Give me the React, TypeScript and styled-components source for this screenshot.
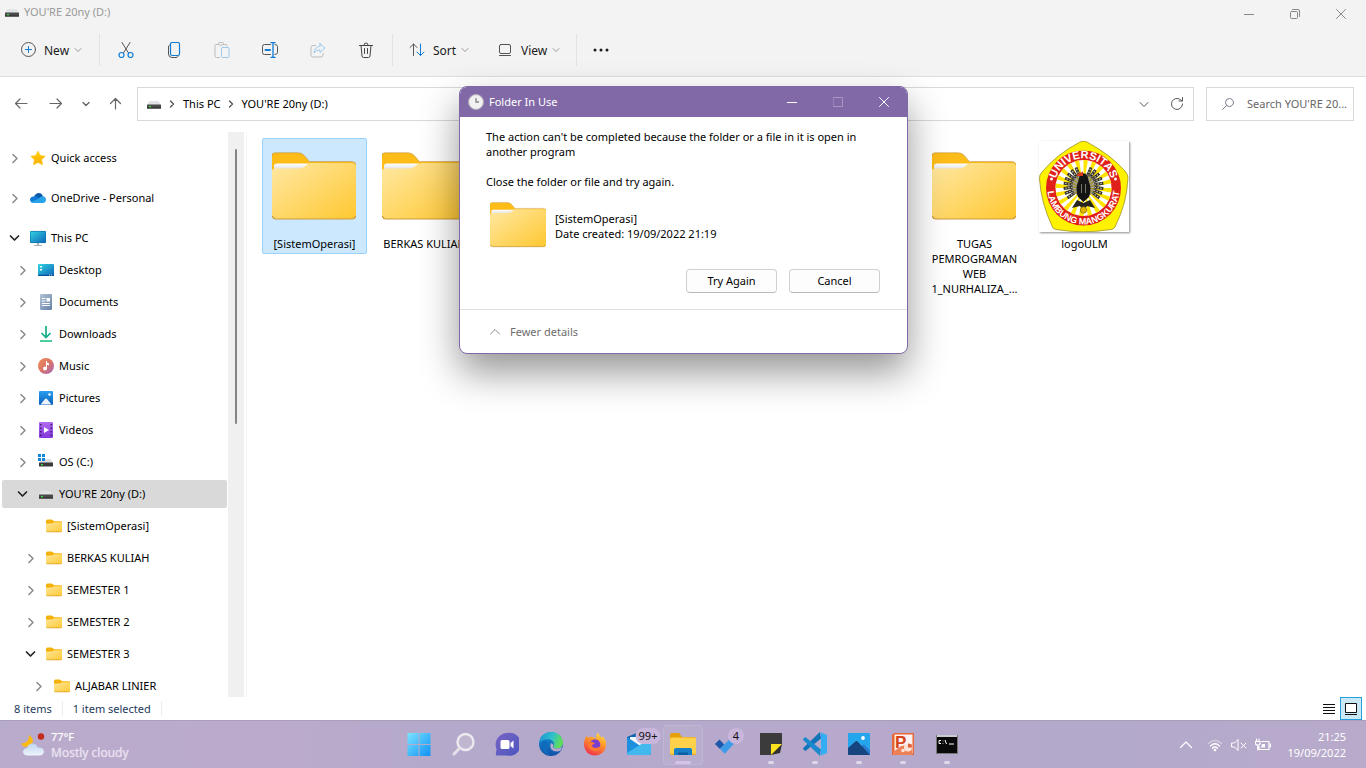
import React from "react";
import styled, { createGlobalStyle, css } from "styled-components";

const GlobalStyle = createGlobalStyle`
  * { box-sizing: border-box; }
  body {
    margin: 0;
    font: 11px/15px "Noto Sans", "Open Sans", sans-serif;
    color: #000;
    background: #fff;
    overflow: hidden;
  }
  button, input { font: inherit; color: inherit; }
  button { border: 0; padding: 0; background: none; }
  svg { display: block; flex: none; }
  ul { list-style: none; margin: 0; padding: 0; }
  p { margin: 0; }
`;

const Screen = styled.div`
  height: 100vh;
  display: flex;
  flex-direction: column;
`;

/* ---------- window chrome ---------- */

const TitleBar = styled.header`
  display: flex;
  align-items: flex-start;
  height: 28px;
  padding: 0 2px 0 4px;
  background: #f3f3f3;
  color: #999;
`;

const WindowTitle = styled.div`
  display: flex;
  align-items: center;
  gap: 4px;
  flex: 1;
  height: 23px;
`;

const CaptionButton = styled.button<{ $dim?: boolean }>`
  display: flex;
  align-items: center;
  justify-content: center;
  width: 46px;
  height: 28px;
  opacity: ${(p) => (p.$dim ? 0.3 : 1)};
`;

const CommandBar = styled.div`
  display: flex;
  align-items: center;
  height: 49px;
  padding: 0 0 4px 20px;
  background: #f3f3f3;
  border-bottom: 1px solid #dedede;
`;

const MenuButton = styled.button<{ $width: number }>`
  display: flex;
  align-items: center;
  gap: 8px;
  width: ${(p) => p.$width}px;
  height: 32px;
  font-size: 12px;
  color: #1b1b1b;
`;

const MenuLabel = styled.span`
  margin-right: -5px;
`;

const Separator = styled.span<{ $after?: number }>`
  width: 1px;
  height: 32px;
  margin-right: ${(p) => p.$after ?? 0}px;
  background: #e2e2e2;
`;

const ToolButton = styled.button`
  display: flex;
  align-items: center;
  justify-content: center;
  width: 48px;
  height: 32px;
`;

const Tools = styled.div`
  display: flex;
  padding: 0 2px;
`;

/* ---------- address row ---------- */

const AddressRow = styled.div`
  display: flex;
  align-items: center;
  padding: 10px 12px 11px 2px;
`;

const NavButton = styled.button<{ $width: number }>`
  display: flex;
  align-items: center;
  justify-content: center;
  width: ${(p) => p.$width}px;
  height: 32px;
`;

const AddressBox = styled.nav`
  display: flex;
  align-items: center;
  flex: 1;
  height: 34px;
  margin: 0 12px 0 7px;
  padding: 0 8px 1px;
  border: 1px solid #d9d9d9;
`;

const Crumb = styled.button`
  padding: 0 5px 0 4px;
`;

const AddressTools = styled.div`
  display: flex;
  gap: 17px;
  margin-left: auto;
`;

const SearchBox = styled.label`
  display: flex;
  align-items: center;
  gap: 11px;
  width: 148px;
  height: 34px;
  padding: 0 0 1px 13px;
  border: 1px solid #d9d9d9;
`;

const SearchInput = styled.input`
  flex: 1;
  min-width: 0;
  padding: 0;
  border: 0;
  outline: 0;
  background: none;
  &::placeholder { color: #666; opacity: 1; }
`;

/* ---------- body ---------- */

const Body = styled.div`
  display: flex;
  flex: 1;
  min-height: 0;
`;

const Sidebar = styled.aside`
  display: flex;
  width: 247px;
  border-right: 1px solid #f5f5f5;
  overflow: hidden;
`;

const Tree = styled.ul`
  flex: 1;
  padding: 10px 1px 0 2px;
`;

const TreeItem = styled.li<{ $spaced?: boolean }>`
  padding: 2px 0;
  margin-bottom: ${(p) => (p.$spaced ? 8 : 0)}px;
`;

const TreeRow = styled.button<{ $level: number; $selected?: boolean }>`
  display: grid;
  grid-template-columns: 16px 16px 1fr;
  align-items: center;
  column-gap: 8px;
  width: 100%;
  height: 28px;
  padding-left: ${(p) => 4 + p.$level * 8}px;
  border-radius: 2px;
  text-align: left;
  background: ${(p) => (p.$selected ? "#d9d9d9" : "transparent")};
`;

const TreeLabel = styled.span`
  margin-left: -3px;
  padding-bottom: 2px;
  white-space: nowrap;
`;

const ScrollTrack = styled.div`
  width: 16px;
  margin-right: 2px;
  padding: 17px 7px 0;
  background: #f0f0f0;
`;

const ScrollThumb = styled.div`
  width: 2px;
  height: 275px;
  border-radius: 1px;
  background: #858585;
`;

const FileGrid = styled.main`
  display: grid;
  grid-template-columns: repeat(auto-fill, 110px);
  align-items: start;
  flex: 1;
  align-content: start;
  padding: 6px 15px 0;
`;

const Tile = styled.button<{ $column: number; $selected?: boolean }>`
  grid-column: ${(p) => p.$column};
  grid-row: 1;
  display: flex;
  flex-direction: column;
  align-items: center;
  width: 105px;
  min-height: 116px;
  border: 1px solid transparent;
  border-radius: 2px;
  ${(p) =>
    p.$selected &&
    css`
      background: #cce8ff;
      border-color: #99d1ff;
    `}
`;

const Thumbnail = styled.span`
  display: flex;
  align-items: center;
  justify-content: center;
  height: 97px;
  padding: 0 2px 2px 0;
`;

const ImageFrame = styled.span`
  background: #fff;
  box-shadow: 1px 1px 2px rgba(0, 0, 0, 0.45);
`;

const TileLabel = styled.span`
  width: 100%;
  text-align: center;
`;

const StatusBar = styled.footer`
  display: flex;
  align-items: center;
  height: 23px;
  padding: 0 4px 0 14px;
  color: #1e395b;
`;

const StatusText = styled.span`
  padding-right: 10px;
  margin-right: 10px;
  border-right: 1px solid #ececec;
`;

const ViewSwitch = styled.div`
  display: flex;
  margin-left: auto;
`;

const ViewButton = styled.button<{ $active?: boolean }>`
  display: flex;
  align-items: center;
  justify-content: center;
  width: 22px;
  height: 23px;
  border: 1px solid ${(p) => (p.$active ? "#26a0da" : "transparent")};
  background: ${(p) => (p.$active ? "#cbe8f6" : "transparent")};
`;

/* ---------- dialog ---------- */

const Dialog = styled.section`
  position: absolute;
  top: 86px;
  left: calc(50% - 224px);
  width: 449px;
  border: 1px solid #8169a7;
  border-radius: 8px;
  background: #fff;
  overflow: hidden;
  box-shadow: 0 18px 38px rgba(0, 0, 0, 0.42);
`;

const DialogBar = styled.header`
  display: flex;
  align-items: center;
  height: 30px;
  padding-left: 8px;
  background: #8169a7;
  color: #fff;
`;

const DialogTitle = styled.h1`
  flex: 1;
  margin: 0 0 0 5px;
  padding-bottom: 2px;
  font: inherit;
`;

const DialogBody = styled.div`
  display: flex;
  flex-direction: column;
  padding: 12px 27px 16px 26px;
  border-bottom: 1px solid #dfdfdf;
`;

const Message = styled.p`
  margin-bottom: 15px;
`;

const Subject = styled.div`
  display: flex;
  align-items: center;
  gap: 9px;
  height: 48px;
  padding-left: 4px;
  margin: -3px 0 20px;
`;

const SubjectText = styled.p`
  padding-top: 2px;
`;

const DialogActions = styled.div`
  display: flex;
  justify-content: flex-end;
  gap: 12px;
`;

const PushButton = styled.button`
  width: 91px;
  height: 24px;
  padding-bottom: 2px;
  border: 1px solid #d0d0d0;
  border-bottom-color: #bababa;
  border-radius: 4px;
  background: #fdfdfd;
`;

const DetailsToggle = styled.button`
  display: flex;
  align-items: center;
  gap: 8px;
  height: 43px;
  padding-left: 28px;
  color: #6d6d6d;
`;

/* ---------- taskbar ---------- */

const Taskbar = styled.footer`
  display: grid;
  grid-template-columns: 1fr auto 1fr;
  align-items: center;
  height: 48px;
  border-top: 1px solid #a99fb9;
  background: linear-gradient(90deg, #b9abcc, #bbaacb 20%, #b4a9cb 33%, #b7a9cb 60%, #b3a9cb 80%, #b9aacb);
  color: #fff;
`;

const Weather = styled.button`
  display: flex;
  align-items: center;
  gap: 5px;
  padding-left: 20px;
  text-align: left;
  color: #fff;
`;

const WeatherText = styled.span`
  display: grid;
  line-height: 16px;
  text-shadow: 0 0 1px rgba(255, 255, 255, 0.5);
`;

const Faint = styled.span`
  font-size: 12px;
  color: #e9e2f2;
`;

const Apps = styled.div`
  display: flex;
`;

const AppButton = styled.button<{ $active?: boolean }>`
  position: relative;
  display: flex;
  align-items: center;
  justify-content: center;
  width: 44px;
  height: 46px;
  padding-bottom: 1px;
  &::before {
    content: "";
    position: absolute;
    inset: 3px 2px;
    border-radius: 4px;
    border: ${(p) => (p.$active ? "1px solid rgba(255,255,255,0.1)" : "0")};
    background: ${(p) => (p.$active ? "rgba(255,255,255,0.05)" : "none")};
  }
  svg { position: relative; }
`;

const RunningMark = styled.span<{ $wide?: boolean }>`
  position: absolute;
  bottom: 4px;
  width: ${(p) => (p.$wide ? 16 : 6)}px;
  height: 3px;
  border-radius: 2px;
  background: ${(p) => (p.$wide ? "#d5c3e6" : "#ded8e8")};
`;

const Badge = styled.span`
  position: absolute;
  top: 6px;
  left: 31px;
  min-width: 16px;
  height: 16px;
  padding: 0 3px;
  border-radius: 8px;
  line-height: 16px;
  color: #111;
  background: #c9b6db;
  transform: translateX(-50%);
`;

const Tray = styled.div`
  display: flex;
  align-items: center;
  justify-content: flex-end;
  gap: 8px;
  padding-right: 20px;
`;

const TrayOverflow = styled.button`
  margin-right: 5px;
`;

const Clock = styled.time`
  display: grid;
  margin-left: 8px;
  line-height: 16px;
  text-align: right;
`;

/* ---------- small glyphs ---------- */

const Glyph = ({ size = 16, children, w = 1, color = "#555" }: { size?: number; children: React.ReactNode; w?: number; color?: string }) => (
  <svg width={size} height={size} viewBox={`0 0 ${size} ${size}`} fill="none" stroke={color} strokeWidth={w} strokeLinecap="round" strokeLinejoin="round" aria-hidden="true">
    {children}
  </svg>
);

type Dir = "down" | "right";
const chevrons: Record<Dir, string> = {
  down: "M3 4.5 6 7.5 9 4.5",
  right: "M4.5 3 7.5 6 4.5 9",
};
const Chevron = ({ dir, color = "#666", w = 1 }: { dir: Dir; color?: string; w?: number }) => (
  <Glyph size={12} color={color} w={w}><path d={chevrons[dir]} /></Glyph>
);

const TreeChevron = ({ open }: { open?: boolean }) => (
  <Glyph w={open ? 1.7 : 1.5} color={open ? "#222" : "#8a8a8a"}>
    <path d={open ? "M4.5 6 8.5 10 12.5 6" : "M7 4.500 11 8.500 7 12.500"} />
  </Glyph>
);

const Minimise = ({ color }: { color: string }) => <Glyph size={12} color={color}><path d="M1 6.500H11" strokeLinecap="butt" /></Glyph>;
const Close = ({ color }: { color: string }) => <Glyph size={12} color={color}><path d="M1.500 1.500 10.500 10.500M10.500 1.500 1.500 10.500" /></Glyph>;

const Drive = () => (
  <svg width="16" height="16" viewBox="0 0 16 16" aria-hidden="true">
    <path d="M3.500 5H12.500L15 9H1Z" fill="#e1e3e6" />
    <rect x="1" y="8.500" width="14" height="4" rx=".6" fill="#4a4a4a" />
    <path d="M1 11.500H15V12.500H1Z" fill="#2b2b2b" />
    <rect x="3" y="10" width="2" height="1.300" fill="#3ddc4a" />
  </svg>
);

const SmallFolder = () => (
  <svg width="16" height="16" viewBox="0 0 16 16" aria-hidden="true">
    <defs>
      <linearGradient id="sf" x1="0" y1="0" x2="1" y2="1"><stop offset="0" stopColor="#ffe69a" /><stop offset="1" stopColor="#ffc935" /></linearGradient>
    </defs>
    <path d="M0 3Q0 1.500 1.500 1.500H5.500Q6.300 1.500 7 2.200L8 3.200H14.500Q16 3.200 16 4.500V8H0Z" fill="#f7b10c" />
    <path d="M0 6.200Q0 5.500 .7 5.500H6L8 4.200H15Q16 4.200 16 5V13Q16 14 15 14H1Q0 14 0 13Z" fill="url(#sf)" />
    <path d="M.2 13.600H15.800Q15.600 14.200 15 14.200H1Q.4 14.200 .2 13.600Z" fill="#dfa11a" />
  </svg>
);

const BigFolder = ({ width }: { width: number }) => (
  <svg width={width} height={(width * 70) / 84} viewBox="0 0 84 70" aria-hidden="true">
    <defs>
      <linearGradient id="bf" x1="0" y1="0" x2="1" y2="1"><stop offset="0" stopColor="#ffe8a3" /><stop offset="1" stopColor="#ffc831" /></linearGradient>
      <linearGradient id="bp" x1="0" y1="0" x2="0" y2="1"><stop offset="0" stopColor="#fff" /><stop offset="1" stopColor="#e3e3e3" /></linearGradient>
    </defs>
    <path d="M0 4Q0 1 3 1H26Q30 1 32.500 4L37.500 10H80Q84 10 84 14V30H0Z" fill="#fdbc18" />
    <path d="M0 4Q0 .8 3 .8H26Q30 .8 32.500 3.800L37.500 9.600H80Q83.500 9.600 84 13" fill="none" stroke="#c8912a" strokeWidth=".7" />
    <path d="M2 14Q2 11.500 5 11.500H37Q34 17 28 17H2Z" fill="url(#bp)" />
    <path d="M0 19Q0 16.500 3 16.500H26Q31 16.500 34 13.500Q36 11 39 11H80Q84 11 84 15V63Q84 67 80 67H4Q0 67 0 63Z" fill="url(#bf)" />
    <path d="M.3 64Q1 67 4 67H80Q83 67 83.700 64" fill="none" stroke="#c99a3a" strokeWidth="1.200" />
  </svg>
);

/* ---------- tree icons ---------- */

const Star = () => (
  <svg width="16" height="16" viewBox="0 0 16 16" aria-hidden="true">
    <defs><linearGradient id="st" x1="0" y1="0" x2="0" y2="1"><stop offset="0" stopColor="#ffd400" /><stop offset="1" stopColor="#fbab0c" /></linearGradient></defs>
    <path d="M8 1.200 10.200 5.600 15.200 6.200 11.600 9.700 12.500 14.700 8 12.400 3.500 14.700 4.400 9.700.8 6.200 5.800 5.600Z" fill="url(#st)" stroke="#ffbf00" strokeWidth=".6" strokeLinejoin="round" />
  </svg>
);

const OneDrive = () => (
  <svg width="16" height="16" viewBox="0 0 16 16" aria-hidden="true">
    <path d="M4 7Q5.500 3 9 3Q12 3.200 13 6.500L8 9Z" fill="#0b5cab" />
    <path d="M3.500 6.500Q6 5.500 8 7.500L12 12.800H3.500Q0 12.500 0 9.500Q.3 6.800 3.500 6.500Z" fill="#1279d4" />
    <path d="M8.500 8.800Q10 6.200 12.500 6.200Q15.800 6.500 16 9.800Q15.800 12.800 13 13H3Q1.600 12.900 1 12Z" fill="#28a3ea" />
  </svg>
);

const Monitor = () => (
  <svg width="16" height="16" viewBox="0 0 16 16" aria-hidden="true">
    <defs><linearGradient id="mo" x1="0" y1="0" x2="1" y2="1"><stop offset="0" stopColor="#33d6e2" /><stop offset="1" stopColor="#0d62b8" /></linearGradient></defs>
    <rect y="1" width="16" height="12" rx="1" fill="url(#mo)" />
    <rect x=".4" y="1.400" width="15.200" height="11.200" rx=".8" fill="none" stroke="#1376a8" strokeWidth=".7" />
    <path d="M7 13H9V15H12V16H4V15H7Z" fill="#a9b0b8" />
  </svg>
);

const DesktopIcon = () => (
  <svg width="16" height="16" viewBox="0 0 16 16" aria-hidden="true">
    <rect y="2" width="16" height="12" rx="1" fill="url(#mo)" />
    <path d="M0 12.700H16V13Q16 14 15 14H1Q0 14 0 13Z" fill="#0a4f96" />
    <path d="M2 4H4V5.500H2ZM2 7H4V8.500H2Z" fill="#fff" />
    <path d="M11 13H12M13 13H14" stroke="#fff" strokeWidth=".8" />
  </svg>
);

const DocumentIcon = () => (
  <svg width="16" height="16" viewBox="0 0 16 16" aria-hidden="true">
    <defs><linearGradient id="dc" x1="0" y1="0" x2="1" y2="1"><stop offset="0" stopColor="#b4c4d8" /><stop offset="1" stopColor="#6581a5" /></linearGradient></defs>
    <rect x="2" width="12" height="16" rx="1" fill="url(#dc)" />
    <path d="M4 4.500H7.500M4 7H7.500M4 9.500H12M4 11.500H12" stroke="#fff" strokeWidth="1.200" />
    <rect x="8.500" y="4" width="3.500" height="3.500" fill="#fff" />
  </svg>
);

const DownloadIcon = () => (
  <svg width="16" height="16" viewBox="0 0 16 16" fill="none" stroke="#12ae88" strokeWidth="1.700" aria-hidden="true">
    <path d="M8 0V11M3.500 7 8 11.500 12.500 7" /><path d="M2 15H14" stroke="#2ec58c" />
  </svg>
);

const MusicIcon = () => (
  <svg width="16" height="16" viewBox="0 0 16 16" aria-hidden="true">
    <defs><linearGradient id="mu" x1="0" y1="0" x2="1" y2="1"><stop offset="0" stopColor="#f2915a" /><stop offset=".5" stopColor="#d87468" /><stop offset="1" stopColor="#a767c0" /></linearGradient></defs>
    <circle cx="8" cy="8" r="8" fill="url(#mu)" />
    <circle cx="7" cy="10.500" r="1.900" fill="#fff" /><path d="M8 3H9V4.500L11 5.500V7.500L9 6.700V10.500H8Z" fill="#fff" />
  </svg>
);

const PictureIcon = () => (
  <svg width="16" height="16" viewBox="0 0 16 16" aria-hidden="true">
    <defs><linearGradient id="pi" x1="0" y1="0" x2="0" y2="1"><stop offset="0" stopColor="#2a9ff0" /><stop offset="1" stopColor="#0a5fb8" /></linearGradient></defs>
    <rect x="1" y="1" width="14" height="14" rx="1" fill="url(#pi)" />
    <path d="M2.500 14.500 7 9Q8 8 9 9L13.500 14.500Z" fill="#eef6fd" /><circle cx="11.500" cy="4.500" r="1.200" fill="#fff" />
  </svg>
);

const VideoIcon = () => (
  <svg width="16" height="16" viewBox="0 0 16 16" aria-hidden="true">
    <defs><linearGradient id="vi" x1="0" y1="0" x2="0" y2="1"><stop offset="0" stopColor="#b36bf0" /><stop offset="1" stopColor="#8338dc" /></linearGradient></defs>
    <rect x="1" width="14" height="16" rx="1" fill="url(#vi)" />
    <path d="M2.800 2V15M13.200 2V15" stroke="#41206e" strokeWidth="1.500" strokeDasharray="1.500 2" />
    <path d="M6 5 11 8 6 11Z" fill="#fff" />
  </svg>
);

const SystemDrive = () => (
  <svg width="16" height="16" viewBox="0 0 16 16" aria-hidden="true">
    <path d="M7 5H12.500L15 9H1L2 7.500Z" fill="#dcdee1" />
    <rect x="1" y="8.500" width="14" height="4" rx=".6" fill="#3b3b3b" />
    <rect x="3" y="10" width="2" height="1.300" fill="#3ddc4a" />
    <path d="M0 0H3V3H0ZM4 0H7V3H4ZM0 4H3V7H0ZM4 4H7V7H4Z" fill="#0f86dc" />
  </svg>
);

/* ---------- university crest thumbnail ---------- */

const rays = Array.from({ length: 20 }, (_, i) => {
  const a = (i * Math.PI) / 10;
  const b = a + Math.PI / 20;
  const at = (t: number) => `${44.5 + 28 * Math.sin(t)} ${47 - 28 * Math.cos(t)}`;
  return `M44.5 47L${at(a)}L${at(b)}Z`;
}).join("");

const wing = (radius: number, from: number, step: number, count: number) =>
  Array.from({ length: count }, (_, i) => {
    const t = ((from + i * step) * Math.PI) / 180;
    const s = Math.sin(t);
    const c = Math.cos(t);
    const r0 = radius - 9;
    return [1, -1].map((k) => `M${44.5 + k * r0 * s} ${45 - r0 * c}L${44.5 + k * radius * s} ${45 - radius * c}`).join("");
  }).join("");

const feathers = wing(20, 22, 15, 8);

const Crest = () => (
  <svg width="90" height="91" viewBox="0 0 90 91" role="img" aria-label="logoULM">
    <path d="M41 1Q44.500-.5 48 1Q72 14 86 30Q89.500 34 89 37Q88 62 76 86Q75 88 72 88.500Q44 93 17 88.500Q14 88 13.500 86Q2 62 .500 38Q0 34 3 31Q18 13 41 1Z" fill="#fff200" stroke="#8d8420" strokeWidth=".7" />
    <circle cx="44.500" cy="47" r="37.500" fill="#e0201b" />
    <circle cx="44.500" cy="47" r="28" fill="#fff" />
    <path d={rays} fill="#ffe400" />
    <path d={feathers} stroke="#35322d" strokeWidth="3" />
    <path d={feathers} stroke="#c9c5b4" strokeWidth="1.200" strokeDasharray="1.500 1.500" />
    <circle cx="44.500" cy="44" r="12" fill="#55504a" opacity=".55" />
    <path d="M40.500 35Q44.500 30 48.500 35L50 41Q53 48 50 56L44.500 61 39 56Q36 48 39 41Z" fill="#141414" />
    <path d="M38 33 44 30.500V35H38Z" fill="#d83a1c" />
    <path d="M42.500 43V52M46.500 43V52" stroke="#8f8b7c" strokeWidth=".8" />
    <path d="M33 67 38 59 44.500 62 51 59 56 67 48 65 44.500 70 41 65Z" fill="#26241f" />
    <circle cx="44.500" cy="69" r="3.200" fill="#e2b500" stroke="#86700a" strokeWidth=".8" />
    <circle cx="12.500" cy="38" r="1.500" fill="#fff" /><circle cx="76.500" cy="38" r="1.500" fill="#fff" />
    <defs>
      <path id="arcTop" d="M16.500 54A29 29 0 1 1 72.500 54" />
      <path id="arcBottom" d="M9.500 39A36 36 0 1 0 79.500 39" />
    </defs>
    <g fill="#fff" fontFamily="Liberation Sans, sans-serif" fontWeight="700" fontSize="11" textAnchor="middle">
      <text><textPath href="#arcTop" startOffset="50%">UNIVERSITAS</textPath></text>
      <text fontSize="9"><textPath href="#arcBottom" startOffset="50%">LAMBUNG MANGKURAT</textPath></text>
    </g>
  </svg>
);

/* ---------- taskbar icons ---------- */

const AppSvg = ({ children }: { children: React.ReactNode }) => (
  <svg width="24" height="24" viewBox="0 0 24 24" aria-hidden="true">{children}</svg>
);

const StartIcon = () => (
  <AppSvg>
    <defs><linearGradient id="wn" x1="0" y1="0" x2="1" y2="1" gradientUnits="objectBoundingBox"><stop offset="0" stopColor="#7de3ff" /><stop offset="1" stopColor="#0f92f5" /></linearGradient></defs>
    <path d="M.5 1H11.500V12H.5ZM12.500 1H23.500V12H12.500ZM.5 13H11.500V24H.5ZM12.500 13H23.500V24H12.500Z" fill="url(#wn)" />
  </AppSvg>
);
const SearchIcon = () => (
  <AppSvg>
    <circle cx="14.500" cy="10" r="8" fill="#c0b6cf" stroke="#eceaef" strokeWidth="2.400" />
    <path d="M8.500 16.200 3 22" stroke="#e3e0e8" strokeWidth="3" strokeLinecap="round" />
  </AppSvg>
);
const ChatIcon = () => (
  <AppSvg>
    <defs><linearGradient id="ch" x1="0" y1="0" x2="1" y2="1"><stop offset="0" stopColor="#7a63c4" /><stop offset="1" stopColor="#4a56c0" /></linearGradient></defs>
    <path d="M12 1A11.500 11.500 0 1 1 12 23.500H2Q.5 23.500 .8 22L1.500 17A11.500 11.500 0 0 1 12 1Z" fill="url(#ch)" />
    <rect x="5.500" y="8" width="9" height="9" rx="1.500" fill="#fff" /><path d="M15.500 11 18.500 8.500V16.500L15.500 14Z" fill="#fff" />
  </AppSvg>
);
const EdgeIcon = () => (
  <AppSvg>
    <defs>
      <linearGradient id="e1" x1="0" y1="0" x2="1" y2=".3"><stop offset="0" stopColor="#1b8fd8" /><stop offset=".6" stopColor="#2fc3c8" /><stop offset="1" stopColor="#62dc5a" /></linearGradient>
      <linearGradient id="e2" x1="0" y1="0" x2="0" y2="1"><stop offset="0" stopColor="#1791d4" /><stop offset="1" stopColor="#1152a8" /></linearGradient>
    </defs>
    <circle cx="12" cy="12" r="12" fill="url(#e2)" />
    <path d="M.2 11C1 4 6 0 12 0C19 0 24 5 24 10.500C24 14.500 21 16.500 17.500 16.500C15 16.500 13.800 15.500 14.500 14.200C16 12 14.500 7.500 9.500 7.200C5 7 1.500 8.500 .2 11Z" fill="url(#e1)" />
    <path d="M14.300 14.300C13.600 15.600 15 16.600 17.500 16.600Q20.500 16.600 23 14.700Q22.700 17 21.500 18.700Q16 20.500 12.500 17.500Q10 14 12.500 11Q14.800 12 14.300 14.300Z" fill="#b7a9cb" />
    <path d="M3.500 9.500C1 15 5 23 12.500 24C7 22 5.500 14 9.500 10.500Q7 8 3.500 9.500Z" fill="#0f6cbd" />
  </AppSvg>
);
const FirefoxIcon = () => (
  <AppSvg>
    <defs><linearGradient id="ff" x1=".8" y1="0" x2=".3" y2="1"><stop offset="0" stopColor="#ffe14a" /><stop offset=".4" stopColor="#ff9a28" /><stop offset="1" stopColor="#f0304c" /></linearGradient></defs>
    <path d="M2.500 5.500 4 3.500 5 6Q6.500 4.500 9 4.800L13.500 6.500Q12.500 2.500 15 .5Q15.500 3.500 18.500 5.500L20 4.500Q23.500 8 23 13.500Q22 22.500 12 23.500Q2 22.800 .8 13Q.8 9 2.500 5.500Z" fill="url(#ff)" />
    <circle cx="12" cy="12.500" r="5.300" fill="#7b3fd0" />
    <path d="M5 11Q8 8.500 12 11.500Q9.500 12 8.500 14Q12 17.500 17 14.500Q15.500 20 10.500 19Q4.500 17 5 11Z" fill="#ff7a30" />
  </AppSvg>
);
const MailIcon = () => (
  <AppSvg>
    <path d="M0 5 12 0 24 5V22H0Z" fill="#0c63ae" /><path d="M3 5H21V13L12 17 3 12Z" fill="#f4f8fc" />
    <path d="M0 5 24 21Q24 23 22 23H2Q0 23 0 21Z" fill="#1e8fdc" /><path d="M24 6 0 21Q0 23 2 23H22Q24 23 24 21Z" fill="#42b8ef" />
  </AppSvg>
);
const ExplorerIcon = () => (
  <svg width="26" height="24" viewBox="0 0 26 24" aria-hidden="true">
    <path d="M0 3Q0 1 2 1H9L12 5H24Q26 5 26 7V12H0Z" fill="#e3a008" />
    <path d="M0 7Q0 5.500 1.500 5.500H24.500Q26 5.500 26 7V22H0Z" fill="#ffd04a" />
    <path d="M4 23V18Q4 16 6 16H20Q22 16 22 18V23Z" fill="#1580c8" /><path d="M8 23V20.500H18V23Z" fill="#0d5fa5" />
    <path d="M0 21.500H4V23H1Q0 23 0 21.500ZM22 21.500H26Q26 23 25 23H22Z" fill="#efb02a" />
  </svg>
);
const TodoIcon = () => (
  <AppSvg>
    <path d="M9 21Q9.500 22 10.500 21L21 9.500 16.500 5.500 4.800 16.800Z" fill="#3d9be9" />
    <path d="M0 12 4.500 7.500 9.200 12.400 4.700 16.800Z" fill="#1d56aa" />
  </AppSvg>
);
const NotesIcon = () => (
  <AppSvg><path d="M1 1H23V12L12 23H1Z" fill="#3b3b3b" /><path d="M12 23V12H23L21 21Z" fill="#303030" /><path d="M12 12H23L12 23Z" fill="#ffe11f" /></AppSvg>
);
const CodeIcon = () => (
  <AppSvg>
    <path d="M17 0 18 6.500 3 18.500Q2 19 1.300 18.300L.3 17.300Q-.2 16.500 .5 15.800Z" fill="#1173b8" />
    <path d="M17 24 18 17.500 3 5.500Q2 5 1.300 5.700L.3 6.700Q-.2 7.500 .5 8.200Z" fill="#1c89cf" />
    <path d="M17 0 24 3V21L17 24Q18 23.500 18 22V2Q18 .5 17 0Z" fill="#35adf2" />
  </AppSvg>
);
const PhotosIcon = () => (
  <AppSvg><rect x="1" y="1" width="22" height="22" rx="1" fill="#25a5ec" /><path d="M12 17 15.500 13Q16.500 12 17.500 13L23 18.500V22Q23 23 22 23H12Z" fill="#2b79cc" /><path d="M1 16 8.500 9.500Q9.500 8.700 10.500 9.500L22.500 22.500Q22.500 23 22 23H2Q1 23 1 22Z" fill="#15447f" /><circle cx="16" cy="6" r="1.900" fill="#fff" /></AppSvg>
);
const SlidesIcon = () => (
  <AppSvg>
    <path d="M3 1H23V23H1V3Z" fill="#e9653a" /><path d="M3.500 2.500H21.500V21.500H3.500Z" fill="#fdf3ee" />
    <text x="4" y="16" fontFamily="Liberation Sans, sans-serif" fontWeight="700" fontSize="17" fill="#d4451b">P</text>
    <path d="M2 23V20L10 14 21 12V23Z" fill="#ee8058" />
    <circle cx="17" cy="15.500" r="4" fill="#fbe3d8" /><path d="M17 15.500V11.500A4 4 0 0 1 21 15.500Z" fill="#e2613a" /><circle cx="12" cy="18.500" r="1.800" fill="#fbe3d8" />
  </AppSvg>
);
const TerminalIcon = () => (
  <AppSvg>
    <rect x="1.500" y="3.500" width="21" height="18" fill="#0a0a0a" stroke="#777" /><rect x="2" y="3" width="20" height="2" fill="#c9ccd1" />
    <path d="M6 8.500H4V11.500H6M8 8.700V9.300M8 11V11.600M10 8 11.500 12M14 12H19" stroke="#fff" fill="none" />
  </AppSvg>
);

/* ---------- data ---------- */

type Node = { label: string; level: number; icon: React.ReactNode; state?: "open" | "closed"; spaced?: boolean; selected?: boolean };

const tree: Node[] = [
  { label: "Quick access", level: 0, icon: <Star />, state: "closed", spaced: true },
  { label: "OneDrive - Personal", level: 0, icon: <OneDrive />, state: "closed", spaced: true },
  { label: "This PC", level: 0, icon: <Monitor />, state: "open" },
  { label: "Desktop", level: 1, icon: <DesktopIcon />, state: "closed" },
  { label: "Documents", level: 1, icon: <DocumentIcon />, state: "closed" },
  { label: "Downloads", level: 1, icon: <DownloadIcon />, state: "closed" },
  { label: "Music", level: 1, icon: <MusicIcon />, state: "closed" },
  { label: "Pictures", level: 1, icon: <PictureIcon />, state: "closed" },
  { label: "Videos", level: 1, icon: <VideoIcon />, state: "closed" },
  { label: "OS (C:)", level: 1, icon: <SystemDrive />, state: "closed" },
  { label: "YOU'RE 20ny (D:)", level: 1, icon: <Drive />, state: "open", selected: true },
  { label: "[SistemOperasi]", level: 2, icon: <SmallFolder /> },
  { label: "BERKAS KULIAH", level: 2, icon: <SmallFolder />, state: "closed" },
  { label: "SEMESTER 1", level: 2, icon: <SmallFolder />, state: "closed" },
  { label: "SEMESTER 2", level: 2, icon: <SmallFolder />, state: "closed" },
  { label: "SEMESTER 3", level: 2, icon: <SmallFolder />, state: "open" },
  { label: "ALJABAR LINIER", level: 3, icon: <SmallFolder />, state: "closed" },
];

const apps: { name: string; icon: React.ReactNode; badge?: string; running?: boolean; active?: boolean }[] = [
  { name: "Start", icon: <StartIcon /> },
  { name: "Search", icon: <SearchIcon /> },
  { name: "Chat", icon: <ChatIcon /> },
  { name: "Edge", icon: <EdgeIcon /> },
  { name: "Firefox", icon: <FirefoxIcon /> },
  { name: "Mail", icon: <MailIcon />, badge: "99+" },
  { name: "File Explorer", icon: <ExplorerIcon />, running: true, active: true },
  { name: "To Do", icon: <TodoIcon />, badge: "4" },
  { name: "Sticky Notes", icon: <NotesIcon />, running: true },
  { name: "Code", icon: <CodeIcon />, running: true },
  { name: "Photos", icon: <PhotosIcon />, running: true },
  { name: "PowerPoint", icon: <SlidesIcon />, running: true },
  { name: "Command Prompt", icon: <TerminalIcon />, running: true },
];

const blue = "#0f7bd4";

export default function App() {
  return (
    <Screen>
      <GlobalStyle />
      <TitleBar>
        <WindowTitle><Drive />YOU'RE 20ny (D:)</WindowTitle>
        <CaptionButton aria-label="Minimize"><Minimise color="#888" /></CaptionButton>
        <CaptionButton aria-label="Restore">
          <Glyph size={12} color="#888"><rect x="1.500" y="3.500" width="7" height="7" rx="1" /><path d="M3.500 1.500H9Q10.500 1.500 10.500 3V8.500" /></Glyph>
        </CaptionButton>
        <CaptionButton aria-label="Close"><Close color="#888" /></CaptionButton>
      </TitleBar>

      <CommandBar role="toolbar">
        <MenuButton $width={79}>
          <Glyph><circle cx="8.500" cy="7.500" r="7" /><path d="M5.500 7.500H11.500M8.500 4.500V10.500" stroke={blue} /></Glyph>
          <MenuLabel>New</MenuLabel>
          <Chevron dir="down" color="#999" />
        </MenuButton>
        <Separator />
        <Tools>
          <ToolButton aria-label="Cut">
            <Glyph><path d="M4 .5 10.500 11M12 .5 5.500 11" /><g stroke={blue} strokeWidth="1.200"><circle cx="3.500" cy="13" r="2.500" /><circle cx="12.500" cy="13" r="2.500" /></g></Glyph>
          </ToolButton>
          <ToolButton aria-label="Copy">
            <Glyph><path d="M3.500 3Q2.500 3.500 2.500 5V12Q2.500 15.500 6 15.500H10Q11.500 15.500 12 14.500" /><rect x="4.500" y=".5" width="9" height="13" rx="1.800" stroke={blue} strokeWidth="1.200" /></Glyph>
          </ToolButton>
          <ToolButton aria-label="Paste" disabled>
            <Glyph color="#bdbdbd"><path d="M4.500 2.500H2Q1 2.500 1 3.500V14Q1 15.500 2.500 15.500H5.500M9.500 2.500H12Q13 2.500 13 3.500V4" /><rect x="4.500" y=".5" width="5" height="2.500" rx="1" /><rect x="7.500" y="5.500" width="7.500" height="10" rx="1" stroke="#9cc9ec" /></Glyph>
          </ToolButton>
          <ToolButton aria-label="Rename">
            <Glyph><path d="M8.500 2.500H2.500Q.5 2.500 .5 4.500V10.500Q.5 12.500 2.500 12.500H8.500M13 2.500Q15.500 2.500 15.500 4.500V10.500Q15.500 12.500 13 12.500" /><g stroke={blue} strokeWidth="1.300"><path d="M9 .5H13M11 .5V15.500M9 15.500H13" /><path d="M3.500 8H8" strokeWidth="2" /></g></Glyph>
          </ToolButton>
          <ToolButton aria-label="Share" disabled>
            <Glyph color="#bdbdbd"><path d="M5.500 3.500H3Q1 3.500 1 5.500V13Q1 15 3 15H11Q13 15 13 13V11.500" /><path d="M10 1.500 15 6 10 10.500V8Q6 7.500 4 11Q4.500 5 10 4Z" stroke="#9cc9ec" /></Glyph>
          </ToolButton>
          <ToolButton aria-label="Delete">
            <Glyph color="#444"><path d="M1.500 3.500H14.500M6 3Q6 1 8 1Q10 1 10 3M3 3.500 4 14Q4.200 15.500 5.500 15.500H10.500Q11.800 15.500 12 14L13 3.500M6.500 6.500V11.500M9.500 6.500V11.500" /></Glyph>
          </ToolButton>
        </Tools>
        <Separator $after={16} />
        <MenuButton $width={88}>
          <Glyph><path d="M4.500 13.500V2M1 5.500 4.500 2 8 5.500" /><path d="M11.500 2V13.500M8 10 11.500 13.500 15 10" stroke={blue} /></Glyph>
          <MenuLabel>Sort</MenuLabel>
          <Chevron dir="down" color="#999" />
        </MenuButton>
        <MenuButton $width={79}>
          <Glyph><rect x="2.500" y="2.500" width="11" height="9" rx="1.500" /><path d="M2.500 13.500H13.500" /></Glyph>
          <MenuLabel>View</MenuLabel>
          <Chevron dir="down" color="#999" />
        </MenuButton>
        <Separator />
        <ToolButton aria-label="See more">
          <svg width="18" height="4" viewBox="0 0 18 4" fill="#1b1b1b"><circle cx="3" cy="2" r="1.500" /><circle cx="9" cy="2" r="1.500" /><circle cx="15" cy="2" r="1.500" /></svg>
        </ToolButton>
      </CommandBar>

      <AddressRow>
        <NavButton $width={38} aria-label="Back"><Glyph w={1.2} color="#666"><path d="M14 7.500H2.500M7 3 2.500 7.500 7 12" /></Glyph></NavButton>
        <NavButton $width={32} aria-label="Forward"><Glyph w={1.2} color="#666"><path d="M2 7.500H13.500M9 3 13.500 7.500 9 12" /></Glyph></NavButton>
        <NavButton $width={28} aria-label="Recent locations"><Chevron dir="down" w={1.4} /></NavButton>
        <NavButton $width={30} aria-label="Up"><Glyph w={1.2} color="#666"><path d="M8.500 13V2.500M3.500 7.500 8.500 2.500 13.500 7.500" /></Glyph></NavButton>
        <AddressBox aria-label="Address">
          <Drive />
          <Crumb aria-label="Locations"><Chevron dir="right" w={1.4} color="#555" /></Crumb>
          <span>This PC</span>
          <Crumb aria-label="This PC folders"><Chevron dir="right" w={1.4} color="#555" /></Crumb>
          <span>YOU'RE 20ny (D:)</span>
          <AddressTools>
            <NavButton $width={16} aria-label="Previous locations"><Glyph><path d="M4 6.500 8 10.500 12 6.500" /></Glyph></NavButton>
            <NavButton $width={16} aria-label="Refresh"><Glyph><path d="M13.500 8A5.500 5.500 0 1 1 11.500 3.700L13 5M13.500 1.500V5H10" /></Glyph></NavButton>
          </AddressTools>
        </AddressBox>
        <SearchBox>
          <Glyph color="#7c7c90"><circle cx="9.500" cy="6.500" r="4" /><path d="M6.500 9.500 2.500 13.500" /></Glyph>
          <SearchInput aria-label="Search" placeholder="Search YOU'RE 20..." />
        </SearchBox>
      </AddressRow>

      <Body>
        <Sidebar>
          <Tree>
            {tree.map((n) => (
              <TreeItem key={n.label} $spaced={n.spaced}>
                <TreeRow $level={n.level} $selected={n.selected}>
                  {n.state ? <TreeChevron open={n.state === "open"} /> : <span />}
                  {n.icon}
                  <TreeLabel>{n.label}</TreeLabel>
                </TreeRow>
              </TreeItem>
            ))}
          </Tree>
          <ScrollTrack><ScrollThumb /></ScrollTrack>
        </Sidebar>
        <FileGrid>
          <Tile $column={1} $selected>
            <Thumbnail><BigFolder width={84} /></Thumbnail>
            <TileLabel>[SistemOperasi]</TileLabel>
          </Tile>
          <Tile $column={2}>
            <Thumbnail><BigFolder width={84} /></Thumbnail>
            <TileLabel>BERKAS KULIAH</TileLabel>
          </Tile>
          <Tile $column={7}>
            <Thumbnail><BigFolder width={84} /></Thumbnail>
            <TileLabel>TUGAS<br />PEMROGRAMAN<br />WEB<br />1_NURHALIZA_...</TileLabel>
          </Tile>
          <Tile $column={8}>
            <Thumbnail><ImageFrame><Crest /></ImageFrame></Thumbnail>
            <TileLabel>logoULM</TileLabel>
          </Tile>
        </FileGrid>
      </Body>

      <StatusBar>
        <StatusText>8 items</StatusText>
        <StatusText>1 item selected</StatusText>
        <ViewSwitch>
          <ViewButton aria-label="Details"><Glyph color="#111"><path d="M2 3.500H14M2 6.500H14M2 9.500H14M2 12.500H14" strokeLinecap="butt" /></Glyph></ViewButton>
          <ViewButton $active aria-label="Large icons"><Glyph color="#111"><path d="M2.500 2.500H13.500V11.500H2.500ZM2 13.500H14" fill="#fff" strokeLinecap="butt" strokeLinejoin="miter" /></Glyph></ViewButton>
        </ViewSwitch>
      </StatusBar>

      <Taskbar>
        <Weather>
          <svg width="26" height="26" viewBox="0 0 26 26" aria-hidden="true">
            <defs><linearGradient id="cl" x1="0" y1="0" x2="0" y2="1"><stop offset="0" stopColor="#bcd3f0" /><stop offset="1" stopColor="#eef5fc" /></linearGradient></defs>
            <path d="M9 3Q14 6 12.500 11L7 15Q2.500 15 1 11.500Q9 11.500 9 3Z" fill="#fbb914" />
            <path d="M7 23.500Q3 23 3 19.500Q3.500 16.500 7 16Q8 11.500 12.500 11.500Q17 11.800 17.500 15.500Q23.500 15 24 19.500Q23.500 23 20 23.500Z" fill="url(#cl)" />
            <circle cx="21" cy="4.500" r="3.200" fill="#c42b1c" />
          </svg>
          <WeatherText><span>77°F</span><Faint>Mostly cloudy</Faint></WeatherText>
        </Weather>
        <Apps>
          {apps.map((a) => (
            <AppButton key={a.name} aria-label={a.name} $active={a.active}>
              {a.icon}
              {a.running && <RunningMark $wide={a.active} />}
              {a.badge && <Badge>{a.badge}</Badge>}
            </AppButton>
          ))}
        </Apps>
        <Tray>
          <TrayOverflow aria-label="Show hidden icons"><Glyph color="#fff" w={1.2}><path d="M2.500 10.500 8 5 13.500 10.500" /></Glyph></TrayOverflow>
          <Glyph color="#fff" w={1.3}><path d="M1.500 6.500Q8 .5 14.500 6.500" opacity=".4" /><path d="M3.500 9Q8 4.500 12.500 9M5.500 11.200Q8 8.800 10.500 11.200" /><circle cx="8" cy="13" r=".7" fill="#fff" /></Glyph>
          <Glyph color="#fff"><path d="M1 6H3.500L7 2.500V13.500L3.500 10H1ZM10 6 15 11M15 6 10 11" /></Glyph>
          <Glyph color="#fff" w={1.2}><path d="M6.500 4.500H14V12.500H4V9.500M15.500 7V10M.5 4.500H5V6.500Q5 8 2.800 8Q.5 8 .5 6.500ZM1.500 4V2M4 4V2M2.800 8V13" /><path d="M7 7H10V10.500H6Z" fill="#fff" stroke="none" /></Glyph>
          <Clock><span>21:25</span><span>19/09/2022</span></Clock>
        </Tray>
      </Taskbar>

      <Dialog role="dialog" aria-label="Folder In Use">
        <DialogBar>
          <svg width="16" height="16" viewBox="0 0 16 16" aria-hidden="true">
            <circle cx="8" cy="8" r="7.500" fill="#ececec" stroke="#b5b0b8" /><circle cx="8" cy="8" r="5.800" fill="#f2f2f2" />
            <path d="M8 4V8H11" stroke="#888" strokeWidth="1.400" fill="none" />
          </svg>
          <DialogTitle>Folder In Use</DialogTitle>
          <CaptionButton aria-label="Minimize"><Minimise color="#fff" /></CaptionButton>
          <CaptionButton aria-label="Maximize" disabled $dim><Glyph size={12} color="#fff"><rect x="1.500" y="1.500" width="9" height="9" /></Glyph></CaptionButton>
          <CaptionButton aria-label="Close"><Close color="#fff" /></CaptionButton>
        </DialogBar>
        <DialogBody>
          <Message>The action can't be completed because the folder or a file in it is open in another program</Message>
          <Message>Close the folder or file and try again.</Message>
          <Subject>
            <BigFolder width={56} />
            <SubjectText>[SistemOperasi]<br />Date created: 19/09/2022 21:19</SubjectText>
          </Subject>
          <DialogActions>
            <PushButton>Try Again</PushButton>
            <PushButton>Cancel</PushButton>
          </DialogActions>
        </DialogBody>
        <DetailsToggle><Glyph color="#8a8a8a" size={14}><path d="M2.500 9 7 4.500 11.500 9" /></Glyph>Fewer details</DetailsToggle>
      </Dialog>
    </Screen>
  );
}
